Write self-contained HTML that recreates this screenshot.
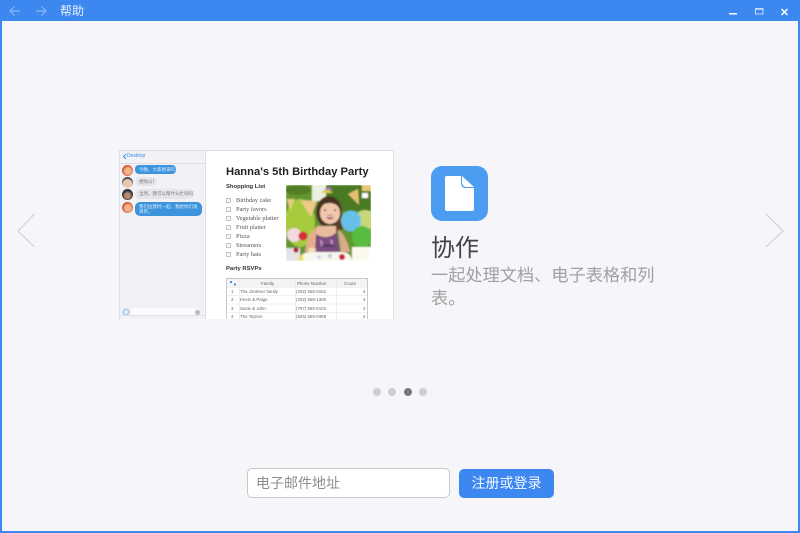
<!DOCTYPE html>
<html lang="zh">
<head>
<meta charset="utf-8">
<title>帮助</title>
<style>
html,body{margin:0;padding:0;width:800px;height:533px;overflow:hidden;background:#3c87f0}
body{position:relative;font-family:"Liberation Sans","Noto Sans CJK SC",sans-serif}
.a{position:absolute;white-space:nowrap}
#content{position:absolute;left:2px;top:21px;width:796px;height:510px;background:#f6f6fa}
#shot{position:absolute;left:119px;top:150px;width:275px;height:169px;background:#fff;overflow:hidden}
#shot .a{line-height:1}
#frame{position:absolute;left:119px;top:150px;width:275px;height:169px;box-sizing:border-box;border:1px solid #dedee0;border-bottom:0;pointer-events:none}
#side{position:absolute;left:0;top:0;width:86px;height:169px;background:#f1f1f6;border-right:1px solid #dedee2}
.bub{position:absolute;border-radius:5px;font-size:4.5px;line-height:5.5px;padding:1.5px 4px;box-sizing:border-box;white-space:nowrap;overflow:hidden;filter:blur(.3px)}
.blue{background:#3d94dc;color:#dcefff}
.gray{background:#e6e6ea;color:#777}
.av{position:absolute;left:3px;width:11px;height:11px;border-radius:50%;filter:blur(.3px)}
.cb{position:absolute;left:107px;width:5px;height:5px;border:.8px solid #c4c4c4;box-sizing:border-box;background:#f8f8f8}
.it{position:absolute;left:117px;font:6.3px "Liberation Serif",serif;color:#555;line-height:7px;white-space:nowrap;filter:blur(.25px)}
.td{position:absolute;font-size:4.4px;color:#666;line-height:5px;white-space:nowrap;filter:blur(.25px)}
.dot{position:absolute;top:388px;width:8px;height:8px;border-radius:50%;background:#cfcfd3}
</style>
</head>
<body>
<div id="content"></div>

<!-- title bar -->
<svg class="a" style="left:0;top:0" width="110" height="21" viewBox="0 0 110 21" fill="none">
<path d="M20 11H10M14.5 6.5L10 11l4.5 4.5" stroke="#8ab6f7" stroke-width="1.200"/>
<path d="M36 11h10M41.5 6.5L46 11l-4.500 4.500" stroke="#8ab6f7" stroke-width="1.200"/>
</svg>
<div class="a" style="left:60px;top:3px;font-size:12px;line-height:17px;color:#e8f1ff">帮助</div>
<svg class="a" style="left:720px;top:0" width="80" height="21" viewBox="0 0 80 21" fill="none">
<rect x="9" y="13" width="8" height="1.500" fill="#fff"/>
<rect x="35.500" y="8.800" width="7.500" height="5.200" stroke="#c4daf9" stroke-width="1"/>
<rect x="35" y="8.300" width="8.500" height="1.300" fill="#e4eefd"/>
<path d="M61.500 9l6 6M67.500 9l-6 6" stroke="#fff" stroke-width="1.500"/>
</svg>

<!-- screenshot -->
<div id="shot">
  <div id="side">
    <div class="a" style="left:0;top:0;width:86px;height:13px;border-bottom:1px solid #dedee2"></div>
    <svg class="a" style="left:3px;top:3px" width="6" height="8" viewBox="0 0 6 8" fill="none"><path d="M4 1L1.500 3.500 4 6" stroke="#3d8fe0" stroke-width="1"/></svg>
    <div class="a" style="left:8px;top:4px;font-size:5px;color:#3d8fe0">Desktop</div>

    <div class="av" style="top:15px;background:radial-gradient(circle at 55% 55%,#f0b58c 0 35%,#d9603a 60%,#9a4a2a 100%)"></div>
    <div class="av" style="top:27px;background:radial-gradient(circle at 50% 65%,#eac5a8 0 38%,#e8e3df 42%,#4a3d36 70%)"></div>
    <div class="av" style="top:39px;background:radial-gradient(circle at 50% 60%,#b98a6c 0 30%,#3a3a3c 55%,#202022 100%)"></div>
    <div class="av" style="top:52px;background:radial-gradient(circle at 55% 55%,#f0b58c 0 35%,#d9603a 60%,#9a4a2a 100%)"></div>

    <div class="bub blue" style="left:16px;top:15px;width:41px;height:8.500px;border-radius:4px;padding:1.500px 4px">今晚，大家想来吗？</div>
    <div class="bub gray" style="left:16px;top:27px;width:22px;height:9px;padding:2px 4px">想啦以！</div>
    <div class="bub gray" style="left:16px;top:39px;width:59px;height:10px;padding:2px 4px">当然。我可以帮什么忙吗吗？</div>
    <div class="bub blue" style="left:16px;top:52px;width:67px;height:14px;padding:1.500px 4px;white-space:normal">我们拉我时一起。我给你们发清单。</div>

    <svg class="a" style="left:3px;top:158px" width="8" height="8" viewBox="0 0 8 8"><circle cx="4" cy="4" r="3" fill="#dbe8f8" stroke="#7fb2ea" stroke-width=".8"/></svg>
    <div class="a" style="left:12px;top:158px;width:65px;height:7px;background:#fbfbfd;border-radius:3px"></div>
    <div class="a" style="left:76px;top:159.500px;width:5px;height:5px;border-radius:50%;background:#bbb"></div>
    <div class="a" style="left:0;top:165px;width:86px;height:1px;background:#e0e0e4"></div>
  </div>

  <div class="a" style="left:107px;top:16.500px;font-size:11.200px;font-weight:700;color:#222;filter:blur(.2px)">Hanna's 5th Birthday Party</div>
  <div class="a" style="left:107px;top:34.500px;font-size:5.900px;font-weight:700;color:#333;filter:blur(.2px)">Shopping List</div>

  <div class="cb" style="top:47.500px"></div><div class="it" style="top:46.500px">Birthday cake</div>
  <div class="cb" style="top:56.500px"></div><div class="it" style="top:55.500px">Party favors</div>
  <div class="cb" style="top:65.500px"></div><div class="it" style="top:64.500px">Vegetable platter</div>
  <div class="cb" style="top:74.500px"></div><div class="it" style="top:73.500px">Fruit platter</div>
  <div class="cb" style="top:83.500px"></div><div class="it" style="top:82.500px">Pizza</div>
  <div class="cb" style="top:92.500px"></div><div class="it" style="top:91.500px">Streamers</div>
  <div class="cb" style="top:101.500px"></div><div class="it" style="top:100.500px">Party hats</div>

  <!-- photo -->
  <svg class="a" style="left:167px;top:35px" width="85" height="76" viewBox="0 0 85 76">
    <defs>
      <filter id="b" x="-5%" y="-5%" width="110%" height="110%"><feGaussianBlur stdDeviation=".8"/></filter>
      <clipPath id="c"><rect width="85" height="76"/></clipPath>
    </defs>
    <g clip-path="url(#c)"><g filter="url(#b)">
      <rect width="85" height="76" fill="#64962f"/>
      <rect x="26" y="0" width="14" height="16" fill="#eef0e0"/>
      <rect x="40" y="0" width="45" height="26" fill="#4a7a24"/>
      <ellipse cx="14" cy="38" rx="15" ry="24" fill="#a6cb3e"/>
      <ellipse cx="12" cy="5" rx="13" ry="5" fill="#527e26"/>
      <path d="M1 14L9 14 4 26z" fill="#e4cc80"/>
      <path d="M14 15L31 16 25 32z" fill="#eec98a"/>
      <path d="M62 9L72 4 73 20z" fill="#e6c070"/>
      <path d="M76 0H85V6H76z" fill="#e8c878"/>
      <path d="M76 8h6v5h-6z" fill="#fff"/>
      <path d="M35 8L41 3 47 8z" fill="#d8cc40"/>
      <path d="M38 5L43 2 47 5z" fill="#b070c4"/>
      <!-- hair -->
      <ellipse cx="43" cy="27" rx="13" ry="16" fill="#4a3120"/>
      <path d="M50 30q9 8 6 15l-6 2z" fill="#5a3c26"/>
      <!-- arms and body -->
      <path d="M19 67Q21 48 31 42L35 45 32 67z" fill="#e4ae8e"/>
      <path d="M52 44Q60 50 64 67L55 67z" fill="#dcaa8a"/>
      <path d="M31 41h19l1 26H30z" fill="#e8bc9e"/>
      <path d="M30 49Q41 56 51 47L54 67H29z" fill="#7c4c80"/>
      <path d="M34 54l3 3-2 5zM44 54l3 2-1 6z" fill="#c79ac4"/>
      <path d="M38 60h10v1.500H38z" fill="#2c2a4c"/>
      <!-- face -->
      <ellipse cx="44" cy="28" rx="10" ry="11" fill="#f2c8ac"/>
      <path d="M33 22Q36 12 45 13q9 1 9 9-6-4-10-4-6 0-11 4z" fill="#4a3120"/>
      <ellipse cx="39" cy="25" rx="1.300" ry=".8" fill="#4a3828"/>
      <ellipse cx="49" cy="25" rx="1.300" ry=".8" fill="#4a3828"/>
      <ellipse cx="44" cy="32" rx="3.500" ry="2.300" fill="#b04a58"/>
      <path d="M41 31h6v.9h-6z" fill="#fff"/>
      <!-- balloons -->
      <circle cx="79" cy="35" r="10" fill="#c6d878"/>
      <ellipse cx="65" cy="36" rx="10" ry="10.500" fill="#66c0e8"/>
      <ellipse cx="76" cy="52" rx="10" ry="11" fill="#58bc40"/>
      <circle cx="8" cy="50" r="7" fill="#f2dade"/>
      <circle cx="17" cy="51" r="4.500" fill="#d42c3c"/>
      <!-- cake / foreground -->
      <rect x="0" y="63" width="14" height="13" fill="#e4e4e6"/>
      <path d="M66 62h19v14H66z" fill="#fbfaec"/>
      <path d="M13 76q1-9 12-9h30q10 0 11 9z" fill="#f8f7ee"/>
      <path d="M13 70h4v6h-4z" fill="#eadf58"/>
      <ellipse cx="26" cy="65" rx="4" ry="2.500" fill="#ecdfb0"/>
      <circle cx="10" cy="65" r="2.600" fill="#b01a2c"/>
      <circle cx="56" cy="72" r="3" fill="#cc1a40"/>
      <circle cx="44" cy="71" r="2.300" fill="#bcd5e8"/>
      <circle cx="33" cy="72" r="1.800" fill="#bcd5e8"/>
      <rect x="83" y="62" width="2" height="14" fill="#fff"/>
    </g></g>
  </svg>

  <div class="a" style="left:107px;top:117px;font-size:5.900px;font-weight:700;color:#333;filter:blur(.2px)">Party RSVPs</div>

  <!-- table -->
  <svg class="a" style="left:107px;top:128px" width="142" height="41" viewBox="0 0 142 41" fill="none">
    <rect x=".5" y=".5" width="141" height="45" fill="#fff" stroke="#c8c8c8"/>
    <rect x="1" y="1" width="140" height="8" fill="#f4f4f4"/>
    <path d="M13.500 1V41M69.500 1V41M110.500 1V41" stroke="#e8e8e8" stroke-width=".7"/>
    <path d="M1 9.500H141M1 17.500H141M1 26H141M1 34.500H141" stroke="#ececec" stroke-width=".7"/>
    <rect x="4" y="3" width="2" height="2" fill="#3d8fe0"/>
    <rect x="8" y="5.500" width="2" height="2" fill="#3d8fe0"/>
  </svg>
  <div class="td" style="left:142px;top:130.500px">Family</div>
  <div class="td" style="left:178px;top:130.500px">Phone Number</div>
  <div class="td" style="left:225px;top:130.500px">Count</div>
  <div class="td" style="left:112px;top:138.500px">1</div><div class="td" style="left:121px;top:138.500px">The Jiménez family</div><div class="td" style="left:177px;top:138.500px">(202) 555-0152</div><div class="td" style="left:244px;top:138.500px">4</div>
  <div class="td" style="left:112px;top:147px">2</div><div class="td" style="left:121px;top:147px">Kevin &amp; Paige</div><div class="td" style="left:177px;top:147px">(202) 555-1306</div><div class="td" style="left:244px;top:147px">4</div>
  <div class="td" style="left:112px;top:155.500px">3</div><div class="td" style="left:121px;top:155.500px">Susie &amp; John</div><div class="td" style="left:177px;top:155.500px">(707) 555-5103</div><div class="td" style="left:244px;top:155.500px">2</div>
  <div class="td" style="left:112px;top:164px">4</div><div class="td" style="left:121px;top:164px">The Taylors</div><div class="td" style="left:177px;top:164px">(925) 555-0469</div><div class="td" style="left:244px;top:164px">2</div>
</div>
<div id="frame"></div>

<!-- feature -->
<svg class="a" style="left:431px;top:166px" width="57" height="55" viewBox="0 0 57 55">
  <rect width="57" height="55" rx="11" fill="#4c9df1"/>
  <path d="M16 10H30V17q0 5 5 5h8V43q0 2-2 2H16q-2 0-2-2V12q0-2 2-2z" fill="#fff"/>
  <path d="M31 10L43 21H36q-5 0-5-5z" fill="#fff"/>
</svg>
<div class="a" style="left:431px;top:232px;font-size:24px;line-height:34px;color:#444">协作</div>
<div class="a" style="left:431px;top:264px;width:228px;white-space:normal;font-size:17.200px;line-height:23px;color:#a0a0a0">一起处理文档、电子表格和列表。</div>

<!-- arrows -->
<svg class="a" style="left:0;top:205px" width="50" height="50" viewBox="0 0 50 50" fill="none"><path d="M34.500 9L18 26l16.500 16" stroke="#cfcfd2" stroke-width="1.100"/></svg>
<svg class="a" style="left:750px;top:205px" width="50" height="50" viewBox="0 0 50 50" fill="none"><path d="M16 9l17 17-17 16" stroke="#cfcfd2" stroke-width="1.100"/></svg>

<!-- dots -->
<div class="dot" style="left:373px"></div>
<div class="dot" style="left:388px"></div>
<div class="dot" style="left:404px;background:#777"></div>
<div class="dot" style="left:419px"></div>

<!-- form -->
<div class="a" style="left:247px;top:468px;width:203px;height:30px;box-sizing:border-box;background:#fff;border:1px solid #c8c8c8;border-radius:5px;padding-left:8px;font-size:14px;line-height:28px;color:#8d8d8d">电子邮件地址</div>
<div class="a" style="left:459px;top:469px;width:95px;height:29px;background:#3c87f0;border-radius:5px;text-align:center;font-size:14px;line-height:28px;color:#f2f7ff">注册或登录</div>
</body>
</html>
